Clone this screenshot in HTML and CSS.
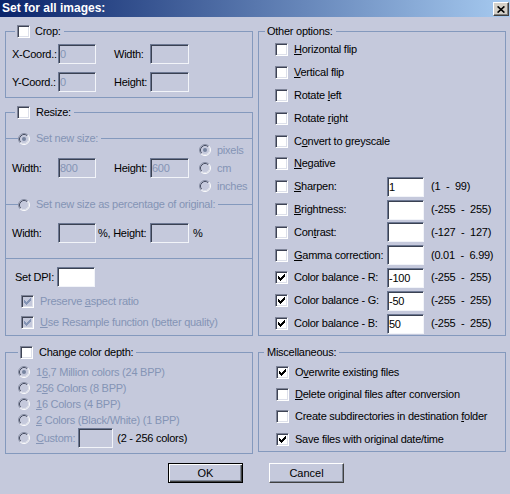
FILE: index.html
```html
<!DOCTYPE html>
<html>
<head>
<meta charset="utf-8">
<title>Set for all images</title>
<link rel="stylesheet" href="styles.css">
</head>
<body>
<svg class="defs" width="0" height="0" aria-hidden="true">
  <defs>
    <symbol id="chk" viewBox="1 1 11 11"><path d="M3 5h1v1h1v1h1v-1h1v-1h1v-1h1v-1h1v3h-1v1h-1v1h-1v1h-1v1h-1v-1h-1v-1h-1z"/></symbol>
    <symbol id="rad" viewBox="0 0 12 12">
      <circle cx="6" cy="6" r="5" fill="#c5c9dc"/>
      <path d="M9.89 2.11A5.5 5.5 0 0 0 2.11 9.89" stroke="#8a91a6" fill="none"/>
      <path d="M2.11 9.89A5.5 5.5 0 0 0 9.89 2.11" stroke="#ffffff" fill="none"/>
      <path d="M9.18 2.82A4.5 4.5 0 0 0 2.82 9.18" stroke="#4a5064" fill="none"/>
      <path d="M2.82 9.18A4.5 4.5 0 0 0 9.18 2.82" stroke="#dde0ea" fill="none"/>
    </symbol>
  </defs>
</svg>
<div class="dialog">
  <div class="titlebar">
    <span class="title">Set for all images:</span>
    <span class="close"><svg width="8" height="7" viewBox="0 0 8 7"><path d="M0.6 0.4l6.8 6.2M7.4 0.4L0.6 6.6" stroke="#000" stroke-width="1.6"/></svg></span>
  </div>
  <div class="main">
    <div class="col">
      <div class="group crop">
        <div class="ghead"><span class="cb"></span><span>Crop:</span></div>
        <div class="fields">
          <span>X-Coord.:</span><input class="edit" value="0" disabled>
          <span class="lbl2">Width:</span><input class="edit" value="" disabled>
          <span>Y-Coord.:</span><input class="edit" value="0" disabled>
          <span class="lbl2">Height:</span><input class="edit" value="" disabled>
        </div>
      </div>
      <div class="group resize">
        <div class="ghead"><span class="cb"></span><span>Resize:</span></div>
        <div class="subhead sub1"><span class="l1"></span><svg class="rb on" width="12" height="12"><use href="#rad"/><circle cx="6" cy="6" r="2" class="dot"/></svg><span class="txt">Set new size:</span><span class="l2"></span></div>
        <div class="sizeblock">
          <div class="fields">
            <span>Width:</span><input class="edit" value="800" disabled>
            <span class="lbl2">Height:</span><input class="edit" value="600" disabled>
          </div>
          <div class="units">
            <div class="opt"><svg class="rb" width="12" height="12"><use href="#rad"/><circle cx="6" cy="6" r="2" class="dot"/></svg><span>pixels</span></div>
            <div class="opt"><svg class="rb" width="12" height="12"><use href="#rad"/></svg><span>cm</span></div>
            <div class="opt"><svg class="rb" width="12" height="12"><use href="#rad"/></svg><span>inches</span></div>
          </div>
        </div>
        <div class="subhead sub2"><span class="l1"></span><svg class="rb" width="12" height="12"><use href="#rad"/></svg><span class="txt">Set new size as percentage of original:</span><span class="l2"></span></div>
        <div class="pct">
          <span>Width:</span><input class="edit" value="" disabled>
          <span class="lbl3">%, Height:</span><input class="edit" value="" disabled>
          <span class="lbl4">%</span>
        </div>
        <div class="divider"></div>
        <div class="dpi"><span class="lbl">Set DPI:</span><input class="edit" value=""></div>
        <div class="chkrow dis first"><span class="cb dis"><svg width="11" height="11"><use href="#chk"/></svg></span><span>Preserve <u>a</u>spect ratio</span></div>
        <div class="chkrow dis"><span class="cb dis"><svg width="11" height="11"><use href="#chk"/></svg></span><span><u>U</u>se Resample function (better quality)</span></div>
      </div>
      <div class="group depth">
        <div class="ghead"><span class="cb"></span><span>Change color depth:</span></div>
        <div class="radlist">
          <div class="opt"><svg class="rb" width="12" height="12"><use href="#rad"/><circle cx="6" cy="6" r="2" class="dot"/></svg><span>1<u>6</u>,7 Million colors (24 BPP)</span></div>
          <div class="opt"><svg class="rb" width="12" height="12"><use href="#rad"/></svg><span>2<u>5</u>6 Colors (8 BPP)</span></div>
          <div class="opt"><svg class="rb" width="12" height="12"><use href="#rad"/></svg><span><u>1</u>6 Colors (4 BPP)</span></div>
          <div class="opt"><svg class="rb" width="12" height="12"><use href="#rad"/></svg><span><u>2</u> Colors (Black/White) (1 BPP)</span></div>
          <div class="opt custom"><svg class="rb" width="12" height="12"><use href="#rad"/></svg><span><u>C</u>ustom:</span><input class="edit" value="" disabled><span class="black">(2 - 256 colors)</span></div>
        </div>
      </div>
    </div>
    <div class="col">
      <div class="group other">
        <div class="ghead"><span>Other options:</span></div>
        <div class="opts">
          <div class="opt-row"><span class="cb"></span><span><u>H</u>orizontal flip</span></div>
          <div class="opt-row"><span class="cb"></span><span><u>V</u>ertical flip</span></div>
          <div class="opt-row"><span class="cb"></span><span>Rotate <u>l</u>eft</span></div>
          <div class="opt-row"><span class="cb"></span><span>Rotate <u>r</u>ight</span></div>
          <div class="opt-row"><span class="cb"></span><span>C<u>o</u>nvert to greyscale</span></div>
          <div class="opt-row"><span class="cb"></span><span><u>N</u>egative</span></div>
          <div class="opt-row"><span class="cb"></span><span class="name"><u>S</u>harpen:</span><input class="edit" value="1"><span class="range">(1  -  99)</span></div>
          <div class="opt-row"><span class="cb"></span><span class="name"><u>B</u>rightness:</span><input class="edit" value=""><span class="range">(-255  -  255)</span></div>
          <div class="opt-row"><span class="cb"></span><span class="name">Con<u>t</u>rast:</span><input class="edit" value=""><span class="range">(-127  -  127)</span></div>
          <div class="opt-row"><span class="cb"></span><span class="name"><u>G</u>amma correction:</span><input class="edit" value=""><span class="range">(0.01  -  6.99)</span></div>
          <div class="opt-row"><span class="cb"><svg width="11" height="11"><use href="#chk"/></svg></span><span class="name">Color balance - R:</span><input class="edit" value="-100"><span class="range">(-255  -  255)</span></div>
          <div class="opt-row"><span class="cb"><svg width="11" height="11"><use href="#chk"/></svg></span><span class="name">Color balance - G:</span><input class="edit" value="-50"><span class="range">(-255  -  255)</span></div>
          <div class="opt-row"><span class="cb"><svg width="11" height="11"><use href="#chk"/></svg></span><span class="name">Color balance - B:</span><input class="edit" value="50"><span class="range">(-255  -  255)</span></div>
        </div>
      </div>
      <div class="group misc">
        <div class="ghead"><span>Miscellaneous:</span></div>
        <div class="mrows">
          <div class="opt-row"><span class="cb"><svg width="11" height="11"><use href="#chk"/></svg></span><span>O<u>v</u>erwrite existing files</span></div>
          <div class="opt-row"><span class="cb"></span><span><u>D</u>elete original files after conversion</span></div>
          <div class="opt-row"><span class="cb"></span><span>Create subdirectories in destination <u>f</u>older</span></div>
          <div class="opt-row"><span class="cb"><svg width="11" height="11"><use href="#chk"/></svg></span><span>Save files with original date/time</span></div>
        </div>
      </div>
    </div>
  </div>
  <div class="buttons">
    <button class="btn default">OK</button>
    <button class="btn">Cancel</button>
  </div>
</div>
</body>
</html>
```
FILE: styles.css
```css
:root {
  --bg: #c5c9dc;
  --gb: #8499bd;
  --dis: #8494b5;
}
* { box-sizing: border-box; }
html, body { margin: 0; padding: 0; }
body {
  background: var(--bg);
  font-family: "Liberation Sans", Arial, sans-serif;
  font-size: 11px;
  line-height: 13px;
  letter-spacing: -0.25px;
  color: #000;
  width: 510px;
  height: 494px;
  overflow: hidden;
}
.defs { position: absolute; width: 0; height: 0; overflow: hidden; }
u { text-underline-offset: 1px; }

.titlebar {
  height: 17px;
  display: flex;
  justify-content: space-between;
  align-items: flex-start;
  background: linear-gradient(90deg, #0a246a, #a6caf0);
}
.title {
  color: #fff;
  font-weight: bold;
  font-size: 12px;
  line-height: 16px;
  letter-spacing: 0;
  padding-left: 2px;
}
.close {
  width: 16px;
  height: 14px;
  margin: 2px 1px 0 0;
  background: #d4d0c8;
  border: 1px solid;
  border-color: #fff #404040 #404040 #fff;
  box-shadow: inset -1px -1px #808080;
  display: flex;
  align-items: center;
  justify-content: center;
}

.main {
  display: flex;
  gap: 5px;
  padding: 14px 4px 0 5px;
}
.col {
  width: 248px;
  display: flex;
  flex-direction: column;
}
.group {
  border: 1px solid var(--gb);
  display: flex;
  flex-direction: column;
}
.ghead {
  display: flex;
  align-items: center;
  gap: 5px;
  height: 13px;
  margin-top: -7px;
  align-self: flex-start;
  padding: 0 3px 0 2px;
  background: var(--bg);
  white-space: nowrap;
}

/* checkbox */
.cb {
  width: 13px;
  height: 13px;
  flex: none;
  background: #fff;
  border: 1px solid;
  border-color: #7e8498 #ffffff #ffffff #7e8498;
  box-shadow: inset 1px 1px #3e4354, inset -1px -1px #dde0ea;
  display: inline-flex;
}
.cb svg { display: block; fill: #000; }
.cb.dis { background: var(--bg); }
.cb.dis svg { fill: var(--dis); }

/* radio */
.rb { flex: none; display: block; }
.rb .dot { fill: #76849f; }

/* edit boxes */
.edit {
  height: 20px;
  width: 100%;
  margin: 0;
  font: inherit;
  letter-spacing: inherit;
  padding: 0 1px;
  border: 1px solid;
  border-color: #6d7893 #f2f4f9 #f2f4f9 #6d7893;
  box-shadow: inset 1px 1px #3a4152;
  background: #fff;
  color: #000;
  outline: none;
}
.edit:disabled {
  background: var(--bg);
  color: var(--dis);
  -webkit-text-fill-color: var(--dis);
  opacity: 1;
}

/* crop */
.crop { height: 67px; }
.crop .ghead { margin-left: 9px; }
.fields {
  display: grid;
  grid-template-columns: 46px 38px 54px 39px;
  grid-auto-rows: 20px;
  row-gap: 8px;
  align-items: center;
  padding-left: 6px;
}
.crop .fields { margin-top: 6px; }
.lbl2 { padding-left: 18px; }

/* resize */
.resize { height: 224px; margin-top: 14px; }
.resize .ghead { margin-left: 9px; gap: 6px; }
.subhead {
  display: flex;
  align-items: center;
  height: 13px;
  color: var(--dis);
  white-space: nowrap;
}
.subhead .l1 { width: 12px; height: 1px; background: var(--gb); }
.subhead .rb { margin-right: 6px; }
.subhead .txt { padding-right: 3px; }
.subhead .l2 { flex: 1; height: 1px; background: var(--gb); }
.sub1 { margin-top: 13px; }
.sub2 { margin-top: 3px; }
.sizeblock { display: flex; align-items: flex-start; }
.sizeblock .fields { margin-top: 13px; }
.units {
  display: flex;
  flex-direction: column;
  margin: -4px 0 0 10px;
}
.units .opt {
  height: 18px;
  display: flex;
  align-items: center;
  gap: 6px;
  color: var(--dis);
}
.pct {
  display: grid;
  grid-template-columns: 46px 38px 54px 39px auto;
  height: 20px;
  align-items: center;
  margin-top: 12px;
  padding-left: 6px;
}
.lbl3 { padding-left: 2px; }
.lbl4 { padding-left: 4px; }
.divider { height: 1px; background: var(--gb); margin-top: 15px; }
.dpi {
  display: flex;
  align-items: center;
  height: 20px;
  margin-top: 8px;
  padding-left: 9px;
}
.dpi .lbl { width: 42px; }
.dpi .edit { width: 38px; }
.chkrow {
  display: flex;
  align-items: center;
  gap: 6px;
  height: 13px;
  margin-top: 8px;
  padding-left: 15px;
  white-space: nowrap;
}
.chkrow.dis { color: var(--dis); }

/* color depth */
.depth { height: 102px; margin-top: 16px; }
.depth .ghead { margin-left: 12px; gap: 6px; }
.radlist {
  display: flex;
  flex-direction: column;
  margin-top: 5px;
  padding-left: 12px;
}
.radlist .opt {
  height: 16px;
  display: flex;
  align-items: center;
  gap: 6px;
  color: var(--dis);
  white-space: nowrap;
}
.radlist .opt.custom { height: 20px; gap: 0; }
.custom .rb { margin-right: 6px; }
.custom .edit { width: 35px; margin-left: 3px; }
.custom .black { color: #000; margin-left: 4px; }

/* other options */
.other { height: 305px; }
.other .ghead { margin-left: 6px; padding: 0 3px 0 2px; }
.opts {
  display: grid;
  grid-auto-rows: 22.8px;
  margin-top: 0.6px;
  padding-left: 16px;
}
.opt-row {
  display: flex;
  align-items: center;
  white-space: nowrap;
}
.opt-row .cb { margin-right: 6px; }
.opt-row .name { width: 93px; }
.opt-row .edit { width: 37px; }
.range { margin-left: 7px; white-space: pre; }

/* misc */
.misc { height: 100px; margin-top: 16px; }
.misc .ghead { margin-left: 5px; padding: 0 3px; }
.mrows {
  display: grid;
  grid-auto-rows: 22.3px;
  margin-top: 2px;
  padding-left: 17px;
}

/* buttons */
.buttons {
  display: flex;
  justify-content: center;
  gap: 26px;
  padding-left: 2px;
  margin-top: 9px;
}
.btn {
  width: 75px;
  height: 20px;
  padding: 0;
  font: inherit;
  letter-spacing: 0;
  color: #000;
  background: var(--bg);
  border: 1px solid;
  border-color: #ffffff #404040 #404040 #ffffff;
  box-shadow: inset -1px -1px #808898;
}
.btn.default {
  border-color: #000;
  box-shadow: inset 1px 1px #ffffff, inset -1px -1px #404040, inset -2px -2px #808898;
}
```
